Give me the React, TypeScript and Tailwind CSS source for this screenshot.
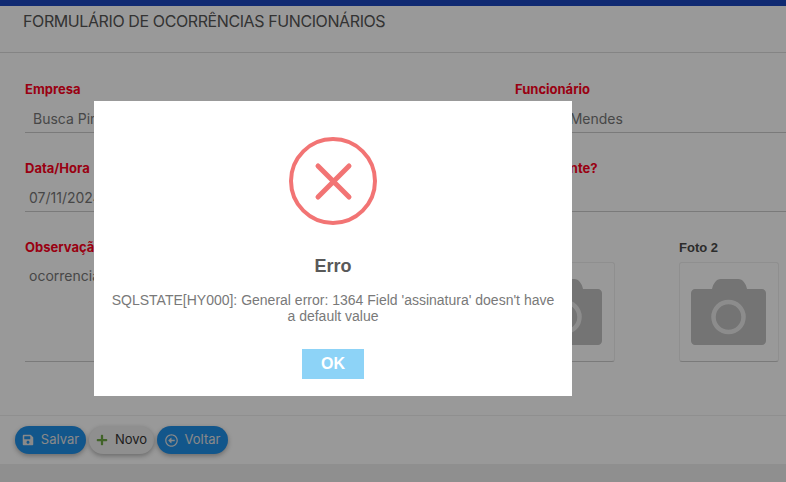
import React from "react";
import { FaSave, FaPlus, FaRegArrowAltCircleLeft } from "react-icons/fa";

const sans = "font-['Inter',sans-serif]";

function Field({ label, value, h = "h-[30px] pt-[7px]", indent = "pl-[4px]" }: { label: string; value: string; h?: string; indent?: string }) {
  return (
    <div className="flex-1">
      <div className="text-[13px] leading-[16px] font-bold text-[#ff0020]">{label}</div>
      <div className={`${h} ${indent} mt-[6px] border-b border-[#ccc] text-[14px] leading-[18px] text-[#777]`}>{value}</div>
    </div>
  );
}

function Camera() {
  return (
    <svg width="76" height="66" viewBox="0 0 76 66">
      <path d="M4 10h17c1-5 4-10 9-10h17c5 0 8 5 9 10h15c2 0 4 2 4 4v48c0 2-2 4-4 4H4c-2 0-4-2-4-4V14c0-2 2-4 4-4z" fill="#c1c1c1" />
      <circle cx="37.500" cy="38" r="15" fill="none" stroke="#eaeaea" strokeWidth="4.500" />
    </svg>
  );
}

function Foto({ label }: { label: string }) {
  return (
    <div className="w-[100px]">
      <div className="pt-[1px] font-['Liberation_Sans',sans-serif] text-[13px] leading-[16px] font-bold text-[#4a4a4a]">{label}</div>
      <div className="mt-[6px] flex h-[100px] w-[100px] items-center justify-center rounded-[3px] border border-[#eee] border-b-[#ccc]">
        <Camera />
      </div>
    </div>
  );
}

function Btn({ icon, label, light, w }: { icon: React.ReactNode; label: string; light?: boolean; w: string }) {
  return (
    <div className={`flex h-[28px] items-center justify-center gap-[7px] rounded-full text-[13px] shadow-[0_2px_5px_rgba(0,0,0,0.3)] ${w} ${light ? "bg-[#eee] text-[#333]" : "bg-[#1f8fe8] text-[#e4e4e4]"}`}>
      {icon}
      <span>{label}</span>
    </div>
  );
}

export default function App() {
  return (
    <div className={`relative flex h-[482px] w-[786px] flex-col overflow-hidden bg-white ${sans}`}>
      <div className="h-[6px] bg-[#1b46be]" />
      <div className="h-[47px] border-b border-[#ddd] pt-[5px] pl-[23px] text-[16px] leading-[20px] tracking-[-0.4px] text-[#555]">
        FORMULÁRIO DE OCORRÊNCIAS FUNCIONÁRIOS
      </div>
      <div className="flex flex-1 flex-col gap-[27px] pt-[28px] pl-[25px]">
        <div className="flex">
          <div className="w-[490px] pr-[25px]"><Field label="Empresa" value="Busca Pina" indent="pl-[8px]" /></div>
          <Field label="Funcionário" value="Carlos Mendes" indent="pl-[8px]" />
        </div>
        <div className="flex">
          <div className="w-[490px] pr-[25px]"><Field label="Data/Hora" value="07/11/2024 10:20" /></div>
          <Field label="Reincidente?" value="" />
        </div>
        <div className="flex">
          <div className="w-[490px] pr-[25px]"><Field label="Observação" value="ocorrencia" h="h-[101px] pt-[6px]" /></div>
          <div className="flex gap-[64px]">
            <Foto label="Foto 1" />
            <Foto label="Foto 2" />
          </div>
        </div>
      </div>
      <div className="flex h-[49px] items-start gap-[3px] border-t border-[#eee] pt-[10px] pl-[15px]">
        <Btn w="w-[71px]" icon={<FaSave className="h-[12px] w-[12px]" />} label="Salvar" />
        <Btn w="w-[65px]" light icon={<FaPlus className="h-[12px] w-[12px] text-[#6da544]" />} label="Novo" />
        <Btn w="w-[71px]" icon={<FaRegArrowAltCircleLeft className="h-[13px] w-[13px]" />} label="Voltar" />
      </div>
      <div className="h-[18px] bg-[#eee]" />
      <div className="absolute inset-0 bg-black/40" />
      <div className="absolute top-[101px] left-[94px] flex h-[295px] w-[478px] flex-col items-center bg-white font-['Liberation_Sans',sans-serif]">
        <svg className="mt-[36px]" width="88" height="88" viewBox="0 0 88 88">
          <circle cx="44" cy="44" r="42" fill="none" stroke="#f27474" strokeWidth="4" />
          <path d="M29 29L60 60M60 29L29 60" stroke="#f27474" strokeWidth="5" strokeLinecap="round" fill="none" />
        </svg>
        <div className="mt-[30px] text-[18px] leading-[22px] font-bold text-[#595959]">Erro</div>
        <div className="mt-[15px] w-[450px] text-center text-[14px] leading-[16px] text-[#797979]">
          SQLSTATE[HY000]: General error: 1364 Field 'assinatura' doesn't have a default value
        </div>
        <div className="mt-[25px] flex h-[30px] w-[62px] items-center justify-center bg-[#8dd3f7] text-[16px] font-bold text-white">OK</div>
      </div>
    </div>
  );
}
